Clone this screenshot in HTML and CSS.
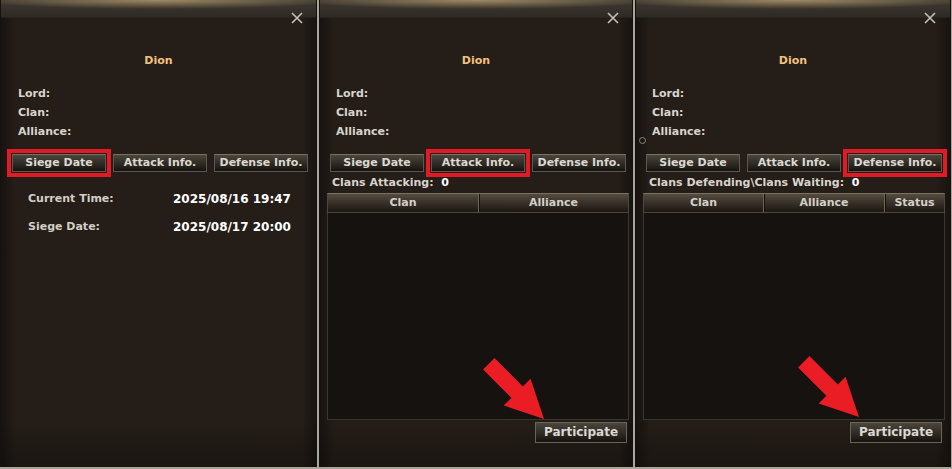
FILE: index.html
```html
<!DOCTYPE html>
<html lang="en">
<head>
<meta charset="utf-8">
<title>Siege Info</title>
<link rel="stylesheet" href="styles.css">
</head>
<body>
<div class="screen">
  <section class="panel p1">
    <div class="titlebar">
      <svg class="close" width="12" height="12" viewBox="0 0 12 12"><path d="M1 1 L11 11 M11 1 L1 11" stroke="#c4c0b8" stroke-width="1.6" fill="none"/></svg>
    </div>
    <h1 class="name">Dion</h1>
    <ul class="info"><li>Lord:</li><li>Clan:</li><li>Alliance:</li></ul>
    <div class="tabs">
      <button class="tab active">Siege Date</button>
      <button class="tab">Attack Info.</button>
      <button class="tab">Defense Info.</button>
    </div>
    <div class="times">
      <span class="lbl">Current Time:</span><span class="val">2025/08/16 19:47</span>
      <span class="lbl">Siege Date:</span><span class="val">2025/08/17 20:00</span>
    </div>
  </section>

  <section class="panel p2">
    <div class="titlebar">
      <svg class="close" width="12" height="12" viewBox="0 0 12 12"><path d="M1 1 L11 11 M11 1 L1 11" stroke="#c4c0b8" stroke-width="1.6" fill="none"/></svg>
    </div>
    <h1 class="name">Dion</h1>
    <ul class="info"><li>Lord:</li><li>Clan:</li><li>Alliance:</li></ul>
    <div class="tabs">
      <button class="tab">Siege Date</button>
      <button class="tab active">Attack Info.</button>
      <button class="tab">Defense Info.</button>
    </div>
    <div class="count">Clans Attacking:&nbsp; <b>0</b></div>
    <div class="table">
      <div class="thead two"><span>Clan</span><span>Alliance</span></div>
      <div class="tbody"></div>
    </div>
    <div class="actions"><button class="btn">Participate</button></div>
    <svg class="arrow a2" width="64" height="64" viewBox="0 0 64 64"><polygon points="12.5,1.1 40.8,29.4 48.5,21.7 62,62 21.7,48.5 29.4,40.8 1.1,12.5" fill="#ea1c24"/></svg>
  </section>

  <section class="panel p3">
    <div class="titlebar">
      <svg class="close" width="12" height="12" viewBox="0 0 12 12"><path d="M1 1 L11 11 M11 1 L1 11" stroke="#c4c0b8" stroke-width="1.6" fill="none"/></svg>
    </div>
    <h1 class="name">Dion</h1>
    <ul class="info"><li>Lord:</li><li>Clan:</li><li>Alliance:</li></ul>
    <div class="tabs">
      <button class="tab">Siege Date</button>
      <button class="tab">Attack Info.</button>
      <button class="tab active">Defense Info.</button>
    </div>
    <div class="count">Clans Defending\Clans Waiting:&nbsp; <b>0</b></div>
    <div class="table">
      <div class="thead three"><span>Clan</span><span>Alliance</span><span>Status</span></div>
      <div class="tbody"></div>
    </div>
    <div class="actions"><button class="btn">Participate</button></div>
    <span class="ring"></span>
    <svg class="arrow a3" width="64" height="64" viewBox="0 0 64 64"><polygon points="12.5,1.1 40.8,29.4 48.5,21.7 62,62 21.7,48.5 29.4,40.8 1.1,12.5" fill="#ea1c24"/></svg>
  </section>
</div>
</body>
</html>
```

FILE: styles.css
```css
* { box-sizing: border-box; }
html, body { margin: 0; padding: 0; }
body {
  width: 952px;
  height: 469px;
  background: #a9a59d;
  font-family: "DejaVu Sans", "Liberation Sans", sans-serif;
  font-weight: bold;
  font-size: 11px;
  overflow: hidden;
}
.screen {
  display: flex;
  gap: 2px;
  height: 467px;
  width: 951px;
}
.panel {
  position: relative;
  height: 467px;
  background:
    linear-gradient(to right, rgba(0,0,0,.35), transparent 14px, transparent calc(100% - 14px), rgba(0,0,0,.35)),
    linear-gradient(to bottom, transparent 420px, rgba(0,0,0,.25)),
    #241d18;
  display: flex;
  flex-direction: column;
  border-left: 1px solid #14110e;
  border-right: 1px solid #14110e;
}
.p1 { width: 317px; }
.p2 { width: 314px; }
.p3 { width: 316px; }

.titlebar {
  height: 36px;
  display: flex;
  justify-content: flex-end;
  align-items: center;
  background:
    radial-gradient(ellipse 60% 9px at 50% 0, rgba(200,175,125,.7), transparent),
    linear-gradient(to bottom, #3e382f 0, #2e2a25 17px, transparent 18px);
}
.p1 .titlebar { padding-right: 13px; }
.p2 .titlebar { padding-right: 13px; }
.p3 .titlebar { padding-right: 14px; }

.name {
  margin: 17px 0 0;
  font-size: 11px;
  line-height: 16px;
  text-align: center;
  color: #f2c27e;
}
.info {
  list-style: none;
  margin: 15px 0 0;
  padding: 0 0 0 16px;
  color: #d8d4cc;
  line-height: 19px;
}
.p1 .info { padding-left: 17px; }

.tabs {
  display: flex;
  gap: 7px;
  margin-top: 13px;
  padding-left: 10px;
}
.p1 .tabs { padding-left: 11px; }
.tab, .btn {
  font-family: inherit;
  font-weight: bold;
  color: #dcd8d0;
  border: 1px solid #5c574d;
  border-top-color: #77715f;
  background: linear-gradient(to bottom, #4a463d 0, #2e2a24 55%, #16130f 100%);
  padding: 0;
  margin: 0;
}
.tab {
  width: 94px;
  height: 18px;
  font-size: 11px;
  line-height: 16px;
}
.tab.active {
  outline: 4px solid #e11a26;
  outline-offset: 1px;
}

.times {
  display: grid;
  grid-template-columns: 145px auto;
  row-gap: 12px;
  margin-top: 19px;
  padding-left: 27px;
  line-height: 16px;
}
.times .lbl { color: #d2cec6; }
.times .val { color: #ffffff; font-size: 12px; }

.count {
  margin-top: 4px;
  padding-left: 12px;
  line-height: 14px;
  color: #d8d4cc;
}
.p3 .count { padding-left: 13px; }
.count b { color: #ffffff; }

.table {
  width: 302px;
  margin: 3px 0 0 7px;
}
.thead {
  display: grid;
  height: 20px;
  border: 1px solid #4c463c;
  border-top-color: #7a725f;
  background: linear-gradient(to bottom, #544c40 0, #3a332a 45%, #1b1712 100%);
  color: #d4d0c8;
  font-size: 11px;
}
.thead.two { grid-template-columns: 150px 1fr; }
.thead.three { grid-template-columns: 119px 121px 1fr; }
.thead span {
  text-align: center;
  line-height: 18px;
}
.thead span + span { border-left: 1px solid #6f6858; box-shadow: inset 1px 0 0 #14110d; }
.tbody {
  height: 207px;
  background: #151210;
  border: 1px solid #3a352f;
  border-top: none;
}
.actions {
  display: flex;
  justify-content: flex-end;
  width: 302px;
  margin: 2px 0 0 7px;
  padding-right: 2px;
}
.p3 .actions { padding-right: 3px; }
.btn {
  width: 92px;
  height: 21px;
  font-size: 12px;
  line-height: 19px;
  border-color: #6a6452;
}

.arrow { position: absolute; }
.a2 { left: 162px; top: 357px; }
.a3 { left: 161px; top: 355px; }
.ring {
  position: absolute;
  left: 3px;
  top: 137px;
  width: 7px;
  height: 7px;
  border: 1px solid #8a857c;
  border-radius: 50%;
}
```
